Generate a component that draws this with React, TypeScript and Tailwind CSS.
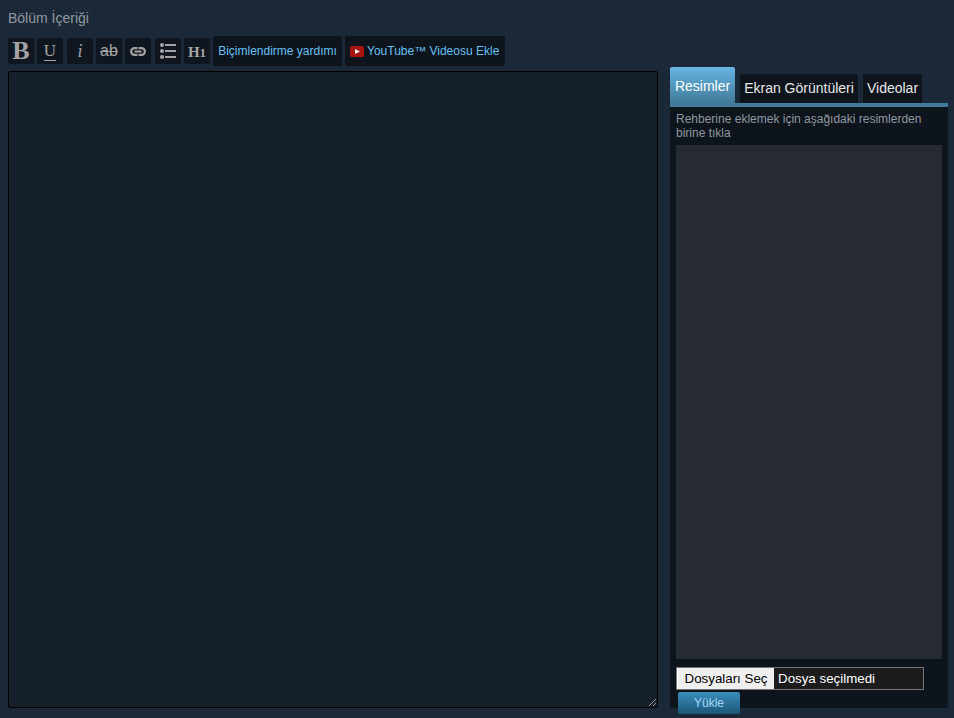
import React from "react";

const font = "font-['Liberation_Sans',Arial,sans-serif]";

function ToolBtn({ children, ml = "ml-[3px]" }: { children: React.ReactNode; ml?: string }) {
  return (
    <div className={`${ml} w-[26px] h-[26px] rounded-[2px] bg-[#0f161f] text-[#a4a4a4] flex items-center justify-center`}>
      {children}
    </div>
  );
}

export default function App() {
  return (
    <div className={`${font} w-[954px] h-[718px] overflow-hidden bg-[#1b2838] flex flex-col pl-[8px]`}>
      <div className="h-[36px] pt-[10px] text-[14px] leading-[16px] text-[#8f98a0]">Bölüm İçeriği</div>

      <div className="flex gap-[12px] flex-1 min-h-0">
        {/* sol: editor */}
        <div className="w-[650px] flex flex-col">
          <div className="h-[30px] flex items-center">
            <ToolBtn ml="ml-0">
              <span className="font-['Liberation_Serif',serif] font-bold text-[26px] leading-none">B</span>
            </ToolBtn>
            <ToolBtn>
              <span className="font-['Liberation_Serif',serif] text-[17px] leading-[14px] pb-[2px] border-b border-[#a4a4a4] mt-[2px]">U</span>
            </ToolBtn>
            <ToolBtn ml="ml-[4px]">
              <span className="font-['Liberation_Serif',serif] italic text-[18px] leading-none">i</span>
            </ToolBtn>
            <ToolBtn>
              <span className="text-[16px] leading-none line-through decoration-1">ab</span>
            </ToolBtn>
            <ToolBtn>
              <svg width="16" height="9" viewBox="0 0 16 9" fill="none" stroke="#a4a4a4" strokeWidth="2.2">
                <path d="M7.5 1.1 H4.5 a3.4 3.4 0 0 0 0 6.8 H7.5 M8.5 1.1 h3 a3.4 3.4 0 0 1 0 6.8 H8.5 M4.5 4.5 H11.5" />
              </svg>
            </ToolBtn>
            <ToolBtn ml="ml-[4px]">
              <svg width="16" height="16" viewBox="0 0 16 16" fill="#a4a4a4">
                <circle cx="2" cy="2" r="2" />
                <circle cx="2" cy="8" r="2" />
                <circle cx="2" cy="14" r="2" />
                <rect x="5" y="1" width="11" height="2" />
                <rect x="5" y="7" width="11" height="2" />
                <rect x="5" y="13" width="11" height="2" />
              </svg>
            </ToolBtn>
            <ToolBtn>
              <span className="font-['Liberation_Serif',serif] font-bold text-[15px] leading-none pt-[2px]">
                H<span className="text-[13px]">1</span>
              </span>
            </ToolBtn>
            <div className="ml-[3px] w-[129px] h-[30px] rounded-[2px] bg-[#0e141b] text-[#66c0f4] text-[12px] flex items-center justify-center">
              Biçimlendirme yardımı
            </div>
            <div className="ml-[3px] w-[160px] h-[30px] pl-[5px] rounded-[2px] bg-[#0e141b] text-[#66c0f4] text-[12px] flex items-center">
              <svg width="14" height="11" viewBox="0 0 14 11" className="mr-[3px]">
                <rect width="14" height="11" rx="2" fill="#a81410" />
                <path d="M5 3 L10 5.5 L5 8 Z" fill="#f4f4f4" />
              </svg>
              YouTube™ Videosu Ekle
            </div>
          </div>
          <div className="relative mt-[5px] h-[637px] rounded-[2px] border border-black bg-[#16202d]">
            <svg width="9" height="9" viewBox="0 0 9 9" className="absolute right-0 bottom-0" stroke="#9a9a9a" fill="none">
              <path d="M1 8 L8 1 M5 8 L8 5" />
            </svg>
          </div>
        </div>

        {/* sag: resimler */}
        <div className="w-[278px] flex flex-col mt-[31px]">
          <div className="flex items-end h-[36px]">
            <div className="w-[65px] h-[36px] rounded-t-[2px] bg-gradient-to-b from-[#67b6e3] to-[#417a9b] text-white text-[14px] flex items-center justify-center pt-[2px]">
              Resimler
            </div>
            <div className="ml-[5px] w-[118px] h-[29px] rounded-t-[2px] bg-[#0e141b] text-[#e8e8e8] text-[14px] flex items-center justify-center">
              Ekran Görüntüleri
            </div>
            <div className="ml-[5px] w-[59px] h-[29px] rounded-t-[2px] bg-[#0e141b] text-[#e8e8e8] text-[14px] flex items-center justify-center">
              Videolar
            </div>
          </div>
          <div className="h-[4px] bg-[#417a9b]" />
          <div className="h-[601px] rounded-b-[3px] bg-[#0e141b] px-[6px] pt-[5px] flex flex-col">
            <div className="h-[33px] shrink-0 text-[12px] leading-[14px] text-[#8f98a0]">
              Rehberine eklemek için aşağıdaki resimlerden birine tıkla
            </div>
            <div className="h-[514px] shrink-0 bg-[#262b32]" />
            <div className="mt-[8px] w-[248px] h-[23px] shrink-0 border border-[#767676] bg-[#1c1c1c] flex text-[13.333px] text-white">
              <div className="w-[97px] bg-[#efefef] text-black flex items-center justify-center border-l border-white">Dosyaları Seç</div>
              <div className="pl-[4px] flex items-center">Dosya seçilmedi</div>
            </div>
            <div className="ml-[2px] mt-[2px] w-[62px] h-[22px] shrink-0 rounded-[2px] bg-gradient-to-b from-[#3a8dbd] to-[#1d5678] text-[#a4d7f5] text-[12px] flex items-center justify-center">
              Yükle
            </div>
          </div>
        </div>
      </div>
    </div>
  );
}
